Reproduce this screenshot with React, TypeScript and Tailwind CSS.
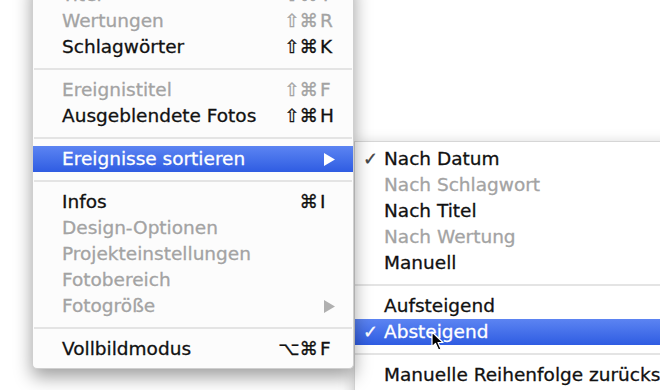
import React from "react";

type Item =
  | { sep: true }
  | {
      sep?: false;
      label: string;
      mods?: string;
      key?: string;
      disabled?: boolean;
      active?: boolean;
      sub?: boolean;
      check?: boolean;
    };

const mainItems: Item[] = [
  { label: "Titel", mods: "⇧⌘", key: "T", disabled: true },
  { label: "Wertungen", mods: "⇧⌘", key: "R", disabled: true },
  { label: "Schlagwörter", mods: "⇧⌘", key: "K" },
  { sep: true },
  { label: "Ereignistitel", mods: "⇧⌘", key: "F", disabled: true },
  { label: "Ausgeblendete Fotos", mods: "⇧⌘", key: "H" },
  { sep: true },
  { label: "Ereignisse sortieren", active: true, sub: true },
  { sep: true },
  { label: "Infos", mods: "⌘", key: "I" },
  { label: "Design-Optionen", disabled: true },
  { label: "Projekteinstellungen", disabled: true },
  { label: "Fotobereich", disabled: true },
  { label: "Fotogröße", disabled: true, sub: true },
  { sep: true },
  { label: "Vollbildmodus", mods: "⌥⌘", key: "F" },
];

const subItems: Item[] = [
  { label: "Nach Datum", check: true },
  { label: "Nach Schlagwort", disabled: true },
  { label: "Nach Titel" },
  { label: "Nach Wertung", disabled: true },
  { label: "Manuell" },
  { sep: true },
  { label: "Aufsteigend" },
  { label: "Absteigend", check: true, active: true },
  { sep: true },
  { label: "Manuelle Reihenfolge zurücksetzen" },
];

function Arrow({ color }: { color: string }) {
  return (
    <svg width="11" height="13" viewBox="0 0 11 13">
      <polygon points="0,0 11,6.5 0,13" fill={color} />
    </svg>
  );
}

function MainRow({ item }: { item: Item }) {
  if (item.sep) {
    return (
      <div className="h-[17px] flex items-center px-[1px]">
        <div className="h-[2px] w-full bg-[#e4e4e4]" />
      </div>
    );
  }
  const color = item.active
    ? "text-white"
    : item.disabled
    ? "text-[#a3a3a3]"
    : "text-[#111111]";
  return (
    <div
      className={`h-[26px] flex items-center pl-[29px] pr-[17px] ${color} ${
        item.active ? "bg-gradient-to-b from-[#5c84f2] to-[#2f5ce2]" : ""
      }`}
    >
      <span className="flex-1 whitespace-nowrap">{item.label}</span>
      {item.mods && (
        <span className="flex items-center shrink-0">
          <span className="pr-[2px]">{item.mods}</span>
          <span className="w-[16px]">{item.key}</span>
        </span>
      )}
      {item.sub && (
        <span className="pr-[1px] shrink-0">
          <Arrow color={item.active ? "#ffffff" : "#b0b0b0"} />
        </span>
      )}
    </div>
  );
}

function SubRow({ item }: { item: Item }) {
  if (item.sep) {
    return (
      <div className="h-[17px] flex items-center">
        <div className="h-[2px] w-full bg-[#e4e4e4]" />
      </div>
    );
  }
  const color = item.active
    ? "text-white"
    : item.disabled
    ? "text-[#a3a3a3]"
    : "text-[#111111]";
  return (
    <div
      className={`h-[26px] flex items-center ${color} ${
        item.active ? "bg-gradient-to-b from-[#5c84f2] to-[#2f5ce2]" : ""
      }`}
    >
      <span
        className={`w-[29px] shrink-0 pl-[8px] text-[18px] ${
          item.active ? "text-white" : "text-[#444444]"
        }`}
      >
        {item.check ? "✓" : ""}
      </span>
      <span className="whitespace-nowrap">{item.label}</span>
    </div>
  );
}

export default function App() {
  return (
    <div
      className="relative w-[660px] h-[390px] overflow-hidden bg-white text-[18.5px] leading-none [-webkit-text-stroke:0.3px_currentColor]"
      style={{ fontFamily: '"DejaVu Sans", "Liberation Sans", sans-serif' }}
    >
      {/* Submenu */}
      <div className="absolute left-[354px] top-[141px] w-[340px] h-[260px] bg-white border-l border-t border-[#d6d6d6] pt-[4px] shadow-[0_4px_14px_rgba(0,0,0,0.25)]">
        {subItems.map((it, i) => (
          <SubRow key={i} item={it} />
        ))}
      </div>

      {/* Main menu */}
      <div className="absolute left-[32px] top-[-22px] w-[322px] bg-[#fcfcfc] border-l border-r border-b border-[#cfcfcf] rounded-b-[5px] pt-[4px] pb-[6px] shadow-[0_8px_18px_rgba(0,0,0,0.38)]">
        {mainItems.map((it, i) => (
          <MainRow key={i} item={it} />
        ))}
      </div>

      {/* Cursor */}
      <svg
        className="absolute left-[431px] top-[331px]"
        width="14"
        height="21"
        viewBox="0 0 14 21"
      >
        <path
          d="M1 1 L1 16 L4.5 12.5 L7.5 19 L10 18 L7 11.5 L12 11.5 Z"
          fill="#000"
          stroke="#fff"
          strokeWidth="1.2"
          strokeLinejoin="round"
        />
      </svg>
    </div>
  );
}
